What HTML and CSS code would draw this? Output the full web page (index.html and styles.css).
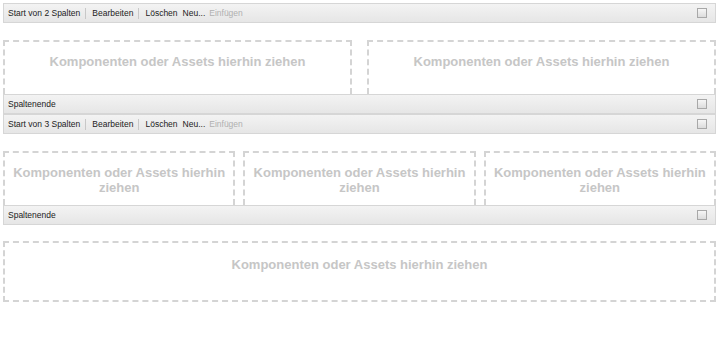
FILE: index.html
```html
<!DOCTYPE html>
<html lang="de">
<head>
  <meta charset="UTF-8" />
  <title>Spalten</title>
  <link rel="stylesheet" href="styles.css">
</head>
<body>
  <div class="page">
    <div class="bar toolbar">
      <span class="item first">Start von 2 Spalten</span>
      <span class="item">Bearbeiten</span>
      <span class="item">Löschen</span>
      <span class="item plain">Neu...</span>
      <span class="item plain off">Einfügen</span>
      <span class="check"></span>
    </div>
    <div class="cols cols-2">
      <div class="drop">Komponenten oder Assets hierhin ziehen</div>
      <div class="drop">Komponenten oder Assets hierhin ziehen</div>
    </div>
    <div class="bar">
      <span class="item first">Spaltenende</span>
      <span class="check"></span>
    </div>
    <div class="bar toolbar">
      <span class="item first">Start von 3 Spalten</span>
      <span class="item">Bearbeiten</span>
      <span class="item">Löschen</span>
      <span class="item plain">Neu...</span>
      <span class="item plain off">Einfügen</span>
      <span class="check"></span>
    </div>
    <div class="cols cols-3">
      <div class="drop">Komponenten oder Assets hierhin ziehen</div>
      <div class="drop">Komponenten oder Assets hierhin ziehen</div>
      <div class="drop">Komponenten oder Assets hierhin ziehen</div>
    </div>
    <div class="bar">
      <span class="item first">Spaltenende</span>
      <span class="check"></span>
    </div>
    <div class="drop single">Komponenten oder Assets hierhin ziehen</div>
  </div>
</body>
</html>
```

FILE: styles.css
```css
body, html {
  margin: 0;
  padding: 0;
  background: #fff;
  font-family: 'Liberation Sans', Arial, sans-serif;
}

.page {
  padding: 3px 3px 0 3px;
}

.bar {
  display: flex;
  align-items: center;
  height: 18px;
  border: 1px solid #d6d6d6;
  background: linear-gradient(#f3f3f3, #e6e6e6);
  font-size: 8.5px;
  color: #222;
}

.item {
  padding: 0 5px 0 6px;
  border-left: 1px solid #c8c8c8;
  line-height: 11px;
}

.item.first {
  border-left: none;
  padding-left: 4px;
}

.item.plain {
  border-left: none;
  padding-left: 0;
  padding-right: 4px;
}

.item.off {
  color: #b0b0b0;
}

.check {
  margin-left: auto;
  margin-right: 8px;
  width: 8px;
  height: 8px;
  border: 1px solid #a8a8a8;
  background: linear-gradient(#f6f6f6, #dcdcdc);
}

.cols {
  display: flex;
  margin-top: 17px;
}

.cols-2 {
  gap: 15px;
}

.cols-3 {
  gap: 8px;
}

.drop {
  flex: 1;
  min-height: 40px;
  padding: 12px 3px 0 3px;
  border: 2px dashed #d4d4d4;
  border-bottom: none;
  text-align: center;
  font-weight: bold;
  font-size: 13px;
  line-height: 15px;
  color: #c6c6c6;
}

.drop.single {
  margin-top: 16px;
  min-height: 43px;
  padding-top: 14px;
  border-bottom: 2px dashed #d4d4d4;
}
```
